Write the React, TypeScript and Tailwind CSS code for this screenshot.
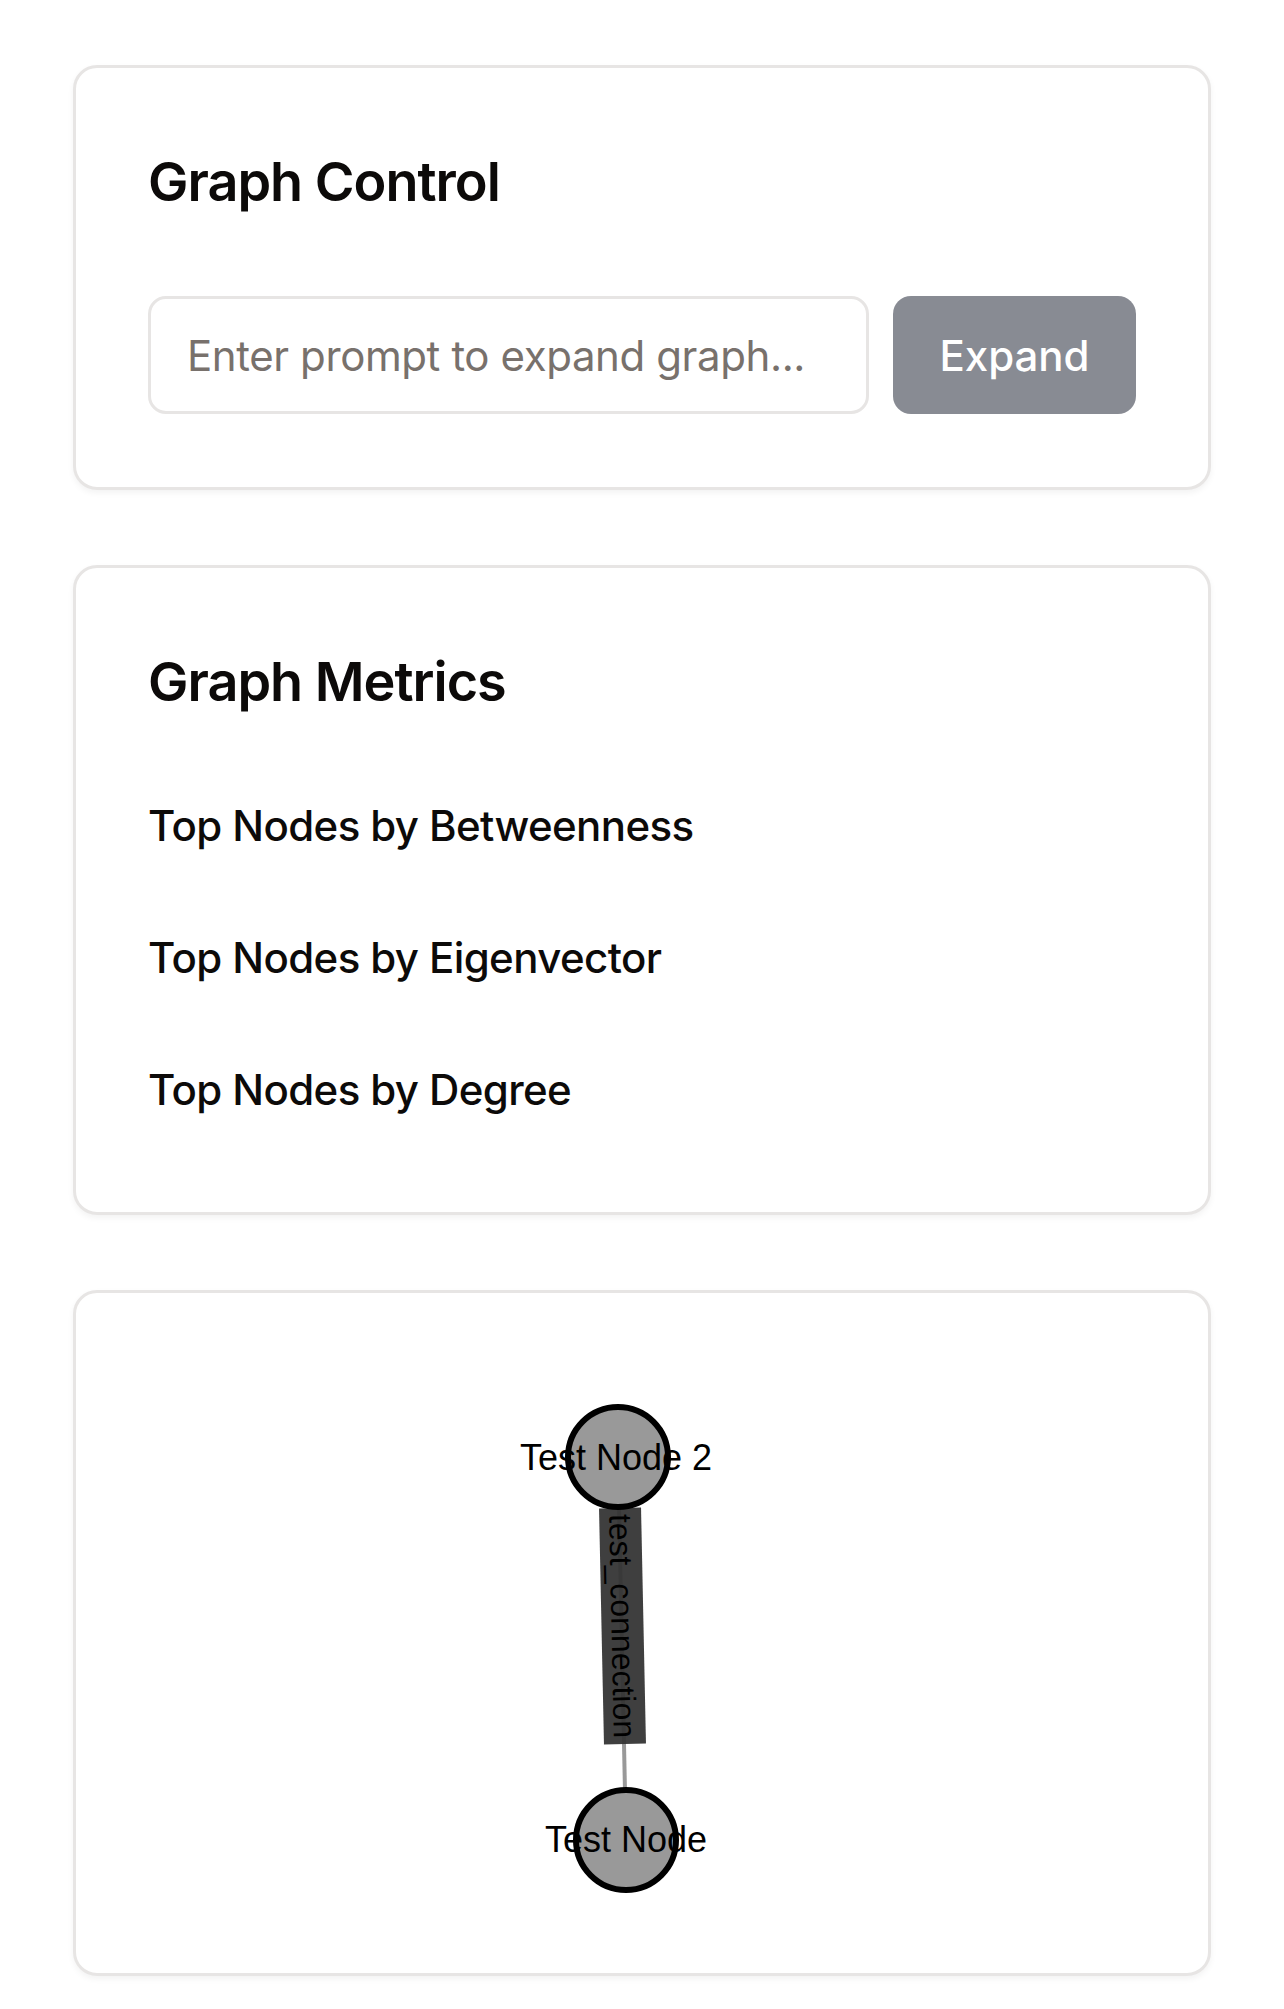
import React from "react";

function Card({ children, className = "" }: { children: React.ReactNode; className?: string }) {
  return (
    <div
      className={
        "rounded-[24px] border-[3px] border-[#e7e5e4] bg-white shadow-[0_3px_6px_rgba(0,0,0,0.05)] " +
        className
      }
    >
      {children}
    </div>
  );
}

function GraphView() {
  const font = "'Liberation Sans', Arial, sans-serif";
  return (
    <svg width="988" height="533" viewBox="0 0 988 533" className="block">
      <line x1={470} y1={92} x2={478} y2={475} stroke="#999999" strokeWidth={4} />
      <g transform="translate(474.5 261) rotate(88.8)">
        <rect x={-118} y={-21} width={236} height={42} fill="#333333" fillOpacity={0.94} />
        <text
          x={0}
          y={0}
          fontSize={32}
          textAnchor="middle"
          dominantBaseline="central"
          fill="#000000"
          fontFamily={font}
        >
          test_connection
        </text>
      </g>
      <circle cx={470} cy={92} r={50} fill="#999999" stroke="#000000" strokeWidth={6} />
      <text
        x={468}
        y={92}
        fontSize={36}
        textAnchor="middle"
        dominantBaseline="central"
        fill="#000000"
        fontFamily={font}
      >
        Test Node 2
      </text>
      <circle cx={478} cy={475} r={50} fill="#999999" stroke="#000000" strokeWidth={6} />
      <text
        x={478}
        y={474}
        fontSize={36}
        textAnchor="middle"
        dominantBaseline="central"
        fill="#000000"
        fontFamily={font}
      >
        Test Node
      </text>
    </svg>
  );
}

export default function App() {
  return (
    <div className="min-h-[2009px] bg-white px-[73px] pt-[65px] pb-[34px] font-['Inter','Noto_Sans',sans-serif] text-[#0c0a09]">
      <div className="flex flex-col gap-[75px]">
        <Card className="px-[72px] pt-[72px] pb-[73px]">
          <h2 className="text-[54px] leading-[84px] font-semibold tracking-[-1px]">Graph Control</h2>
          <div className="mt-[72px] flex gap-[24px]">
            <input
              type="text"
              placeholder="Enter prompt to expand graph..."
              className="h-[118px] min-w-0 flex-1 rounded-[18px] border-[3px] border-[#e7e5e4] bg-white px-[36px] text-[42px] tracking-[-0.4px] text-[#0c0a09] outline-none placeholder:text-[#78716c]"
            />
            <button className="h-[118px] w-[243px] shrink-0 rounded-[18px] bg-[#888b93] text-[42px] font-medium text-white">
              Expand
            </button>
          </div>
        </Card>

        <Card className="p-[72px]">
          <h2 className="text-[54px] leading-[84px] font-semibold tracking-[-1px]">Graph Metrics</h2>
          <div className="mt-[72px] flex flex-col gap-[72px] pb-[20px]">
            <h3 className="text-[42px] leading-[60px] font-medium tracking-[-0.6px]">Top Nodes by Betweenness</h3>
            <h3 className="text-[42px] leading-[60px] font-medium tracking-[-0.6px]">Top Nodes by Eigenvector</h3>
            <h3 className="text-[42px] leading-[60px] font-medium tracking-[-0.6px]">Top Nodes by Degree</h3>
          </div>
        </Card>

        <Card className="px-[72px] pt-[72px] pb-[75px]">
          <GraphView />
        </Card>
      </div>
    </div>
  );
}
